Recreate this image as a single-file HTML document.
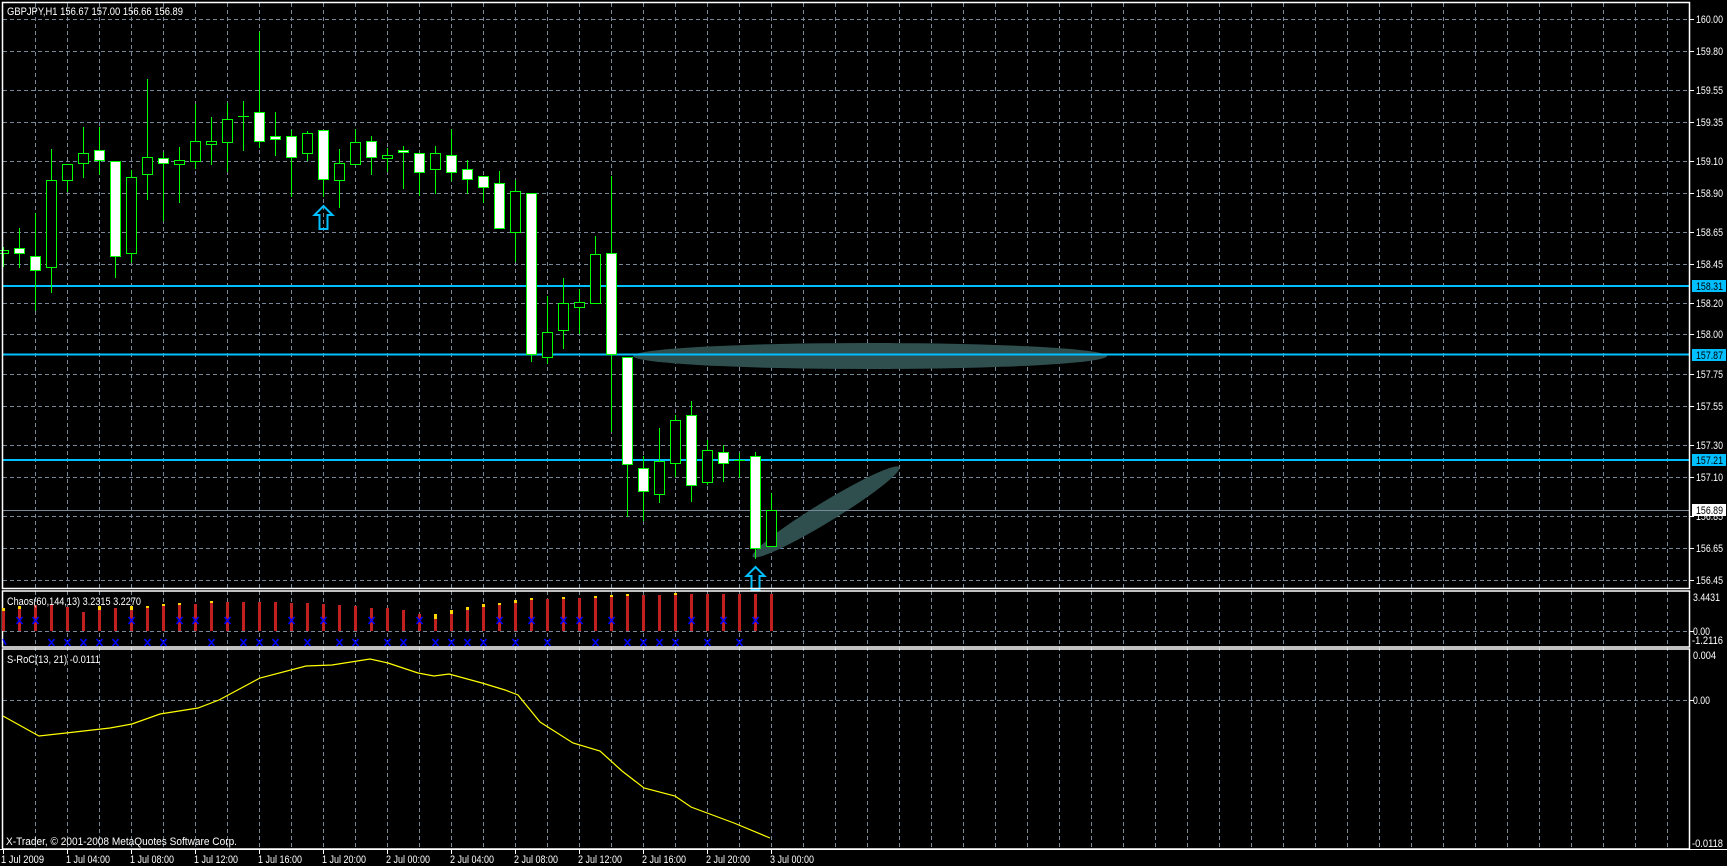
<!DOCTYPE html>
<html><head><meta charset="utf-8"><style>
html,body{margin:0;padding:0;background:#000;overflow:hidden}
svg{display:block}
text{font-family:"Liberation Sans",sans-serif;font-size:11px;fill:#fff}
</style></head><body>
<svg width="1727" height="866" viewBox="0 0 1727 866" xmlns="http://www.w3.org/2000/svg">
<rect width="1727" height="866" fill="#000"/>
<!-- vertical grid -->
<path stroke="#778899" stroke-width="1" stroke-dasharray="4 3" fill="none" d="M35.5 3V849M67.5 3V849M99.5 3V849M131.5 3V849M163.5 3V849M195.5 3V849M227.5 3V849M259.5 3V849M291.5 3V849M323.5 3V849M355.5 3V849M387.5 3V849M419.5 3V849M451.5 3V849M483.5 3V849M515.5 3V849M547.5 3V849M579.5 3V849M611.5 3V849M643.5 3V849M675.5 3V849M707.5 3V849M739.5 3V849M771.5 3V849M803.5 3V849M835.5 3V849M867.5 3V849M899.5 3V849M931.5 3V849M963.5 3V849M995.5 3V849M1027.5 3V849M1059.5 3V849M1091.5 3V849M1123.5 3V849M1155.5 3V849M1187.5 3V849M1219.5 3V849M1251.5 3V849M1283.5 3V849M1315.5 3V849M1347.5 3V849M1379.5 3V849M1411.5 3V849M1443.5 3V849M1475.5 3V849M1507.5 3V849M1539.5 3V849M1571.5 3V849M1603.5 3V849M1635.5 3V849M1667.5 3V849"/>
<!-- horizontal grid -->
<path stroke="#778899" stroke-width="1" stroke-dasharray="4 3" fill="none" d="M3 19.5H1690M3 51.5H1690M3 90.5H1690M3 122.5H1690M3 161.5H1690M3 193.5H1690M3 232.5H1690M3 264.5H1690M3 303.5H1690M3 334.5H1690M3 374.5H1690M3 406.5H1690M3 445.5H1690M3 477.5H1690M3 516.5H1690M3 548.5H1690M3 580.5H1690M3 631.5H1690M3 700.5H1690"/>

<!-- ellipses -->
<ellipse cx="870" cy="356" rx="237" ry="13" fill="#2f4f4f"/>
<ellipse cx="826" cy="512" rx="86" ry="10" fill="#2f4f4f" transform="rotate(-31.4 826 512)"/>

<!-- levels -->
<path stroke="#00bfff" stroke-width="2" d="M3 286H1690M3 354.5H1690M3 460H1690"/>
<path stroke="#778899" stroke-width="1" d="M3 510.5H1690"/>

<!-- wicks -->
<path stroke="#00ff00" stroke-width="1" fill="none" d="M3.5 247V267M19.5 228V268M35.5 213V311M51.5 149V293M67.5 164V192M83.5 127V178M99.5 127V175M115.5 161V278M131.5 170V263M147.5 79V200M163.5 152V221M179.5 147V203M195.5 104V169M211.5 117V165M227.5 103V172M243.5 101V151M259.5 32V148M275.5 112V156M291.5 130V197M307.5 131V161M323.5 130V197M339.5 149V208M355.5 129V164M371.5 136V175M387.5 148V172M403.5 146V189M419.5 153V196M435.5 146V194M451.5 129V181M467.5 160V194M483.5 176V203M499.5 171V228M515.5 180V262M531.5 193V362M547.5 296V364M563.5 278V349M579.5 289V334M595.5 236V303M611.5 176V432M627.5 357V517M643.5 456V521M659.5 428V503M675.5 415V477M691.5 401V502M707.5 440V485M723.5 445V482M739.5 453V478M755.5 452V559M771.5 493V546M238 116.5H249M734 460.5H745"/>
<!-- bodies -->
<g stroke="#00ff00" stroke-width="1">
<rect x="-1.5" y="250.5" width="10" height="3" fill="#000"/>
<rect x="14.5" y="248.5" width="10" height="5" fill="#fff"/>
<rect x="30.5" y="256.5" width="10" height="14" fill="#fff"/>
<rect x="46.5" y="180.5" width="10" height="87" fill="#000"/>
<rect x="62.5" y="164.5" width="10" height="16" fill="#000"/>
<rect x="78.5" y="153.5" width="10" height="10" fill="#000"/>
<rect x="94.5" y="150.5" width="10" height="10" fill="#fff"/>
<rect x="110.5" y="161.5" width="10" height="95" fill="#fff"/>
<rect x="126.5" y="177.5" width="10" height="76" fill="#000"/>
<rect x="142.5" y="157.5" width="10" height="17" fill="#000"/>
<rect x="158.5" y="158.5" width="10" height="5" fill="#fff"/>
<rect x="174.5" y="160.5" width="10" height="4" fill="#000"/>
<rect x="190.5" y="141.5" width="10" height="20" fill="#000"/>
<rect x="206.5" y="141.5" width="10" height="3" fill="#000"/>
<rect x="222.5" y="119.5" width="10" height="23" fill="#000"/>
<rect x="254.5" y="112.5" width="10" height="29" fill="#fff"/>
<rect x="270.5" y="136.5" width="10" height="3" fill="#fff"/>
<rect x="286.5" y="136.5" width="10" height="21" fill="#fff"/>
<rect x="302.5" y="133.5" width="10" height="20" fill="#000"/>
<rect x="318.5" y="130.5" width="10" height="49" fill="#fff"/>
<rect x="334.5" y="163.5" width="10" height="17" fill="#000"/>
<rect x="350.5" y="142.5" width="10" height="22" fill="#000"/>
<rect x="366.5" y="141.5" width="10" height="16" fill="#fff"/>
<rect x="382.5" y="155.5" width="10" height="3" fill="#000"/>
<rect x="398.5" y="150.5" width="10" height="2" fill="#fff"/>
<rect x="414.5" y="153.5" width="10" height="19" fill="#fff"/>
<rect x="430.5" y="153.5" width="10" height="16" fill="#000"/>
<rect x="446.5" y="155.5" width="10" height="17" fill="#fff"/>
<rect x="462.5" y="169.5" width="10" height="10" fill="#fff"/>
<rect x="478.5" y="176.5" width="10" height="11" fill="#fff"/>
<rect x="494.5" y="183.5" width="10" height="45" fill="#fff"/>
<rect x="510.5" y="191.5" width="10" height="41" fill="#000"/>
<rect x="526.5" y="193.5" width="10" height="161" fill="#fff"/>
<rect x="542.5" y="332.5" width="10" height="25" fill="#000"/>
<rect x="558.5" y="303.5" width="10" height="27" fill="#000"/>
<rect x="574.5" y="302.5" width="10" height="5" fill="#000"/>
<rect x="590.5" y="254.5" width="10" height="49" fill="#000"/>
<rect x="606.5" y="253.5" width="10" height="101" fill="#fff"/>
<rect x="622.5" y="357.5" width="10" height="107" fill="#fff"/>
<rect x="638.5" y="468.5" width="10" height="23" fill="#fff"/>
<rect x="654.5" y="461.5" width="10" height="33" fill="#000"/>
<rect x="670.5" y="420.5" width="10" height="43" fill="#000"/>
<rect x="686.5" y="415.5" width="10" height="70" fill="#fff"/>
<rect x="702.5" y="450.5" width="10" height="32" fill="#000"/>
<rect x="718.5" y="452.5" width="10" height="11" fill="#fff"/>
<rect x="750.5" y="456.5" width="10" height="92" fill="#fff"/>
<rect x="766.5" y="510.5" width="10" height="36" fill="#000"/>
</g>

<!-- arrows -->
<path fill="none" stroke="#00bfff" stroke-width="2" d="M323.5 206L332.5 215H327.5V229H319.5V215H314.5Z"/>
<path fill="none" stroke="#00bfff" stroke-width="2" d="M755.5 567L764.5 576H759.5V590H751.5V576H746.5Z"/>

<!-- panels frames -->
<g fill="none" stroke="#fff" stroke-width="1.5">
<rect x="2.5" y="2.5" width="1687" height="586"/>
<rect x="2.5" y="591" width="1687" height="56"/>
<rect x="2.5" y="649" width="1687" height="200"/>
</g>
<path stroke="#fff" d="M0 849.5H1727"/>

<!-- chaos bars -->
<g fill="#c02020">
<rect x="2" y="609" width="3" height="22"/><rect x="18" y="607" width="3" height="24"/><rect x="34" y="605" width="3" height="26"/><rect x="50" y="605" width="3" height="26"/><rect x="66" y="607" width="3" height="24"/><rect x="82" y="612" width="3" height="19"/><rect x="98" y="608" width="3" height="23"/><rect x="114" y="608" width="3" height="23"/><rect x="130" y="608" width="3" height="23"/><rect x="146" y="607" width="3" height="24"/><rect x="162" y="605" width="3" height="26"/><rect x="178" y="604" width="3" height="27"/><rect x="194" y="604" width="3" height="27"/><rect x="210" y="602" width="3" height="29"/><rect x="226" y="602" width="3" height="29"/><rect x="242" y="602" width="3" height="29"/><rect x="258" y="602" width="3" height="29"/><rect x="274" y="602" width="3" height="29"/><rect x="290" y="603" width="3" height="28"/><rect x="306" y="603" width="3" height="28"/><rect x="322" y="604" width="3" height="27"/><rect x="338" y="605" width="3" height="26"/><rect x="354" y="606" width="3" height="25"/><rect x="370" y="608" width="3" height="23"/><rect x="386" y="608" width="3" height="23"/><rect x="402" y="610" width="3" height="21"/><rect x="418" y="614" width="3" height="17"/><rect x="434" y="615" width="3" height="16"/><rect x="450" y="611" width="3" height="20"/><rect x="466" y="608" width="3" height="23"/><rect x="482" y="605" width="3" height="26"/><rect x="498" y="604" width="3" height="27"/><rect x="514" y="601" width="3" height="30"/><rect x="530" y="599" width="3" height="32"/><rect x="546" y="599" width="3" height="32"/><rect x="562" y="598" width="3" height="33"/><rect x="578" y="598" width="3" height="33"/><rect x="594" y="597" width="3" height="34"/><rect x="610" y="596" width="3" height="35"/><rect x="626" y="595" width="3" height="36"/><rect x="642" y="595" width="3" height="36"/><rect x="658" y="595" width="3" height="36"/><rect x="674" y="594" width="3" height="37"/><rect x="690" y="594" width="3" height="37"/><rect x="706" y="594" width="3" height="37"/><rect x="722" y="594" width="3" height="37"/><rect x="738" y="594" width="3" height="37"/><rect x="754" y="594" width="3" height="37"/><rect x="770" y="594" width="3" height="37"/>
</g>
<g fill="#ffd700">
<rect x="2" y="608" width="3" height="3"/><rect x="18" y="606" width="3" height="3"/><rect x="98" y="606" width="3" height="4"/><rect x="130" y="606" width="3" height="4"/><rect x="146" y="606" width="3" height="2"/><rect x="162" y="604" width="3" height="2"/><rect x="178" y="603" width="3" height="2"/><rect x="210" y="601" width="3" height="2"/><rect x="434" y="614" width="3" height="5"/><rect x="450" y="610" width="3" height="4"/><rect x="466" y="607" width="3" height="3"/><rect x="482" y="604" width="3" height="3"/><rect x="498" y="603" width="3" height="2"/><rect x="514" y="600" width="3" height="3"/><rect x="530" y="598" width="3" height="2"/><rect x="562" y="597" width="3" height="2"/><rect x="594" y="596" width="3" height="2"/><rect x="610" y="595" width="3" height="2"/><rect x="626" y="594" width="3" height="2"/><rect x="674" y="593" width="3" height="2"/>
</g>
<!-- blue markers -->
<path stroke="#0000ff" stroke-width="1.6" fill="none" d="M16.5 617l6 7M22.5 617l-6 7M32.5 617l6 7M38.5 617l-6 7M128.5 617l6 7M134.5 617l-6 7M176.5 617l6 7M182.5 617l-6 7M192.5 617l6 7M198.5 617l-6 7M224.5 617l6 7M230.5 617l-6 7M288.5 617l6 7M294.5 617l-6 7M320.5 617l6 7M326.5 617l-6 7M368.5 617l6 7M374.5 617l-6 7M416.5 617l6 7M422.5 617l-6 7M496.5 617l6 7M502.5 617l-6 7M528.5 617l6 7M534.5 617l-6 7M560.5 617l6 7M566.5 617l-6 7M576.5 617l6 7M582.5 617l-6 7M608.5 617l6 7M614.5 617l-6 7M688.5 617l6 7M694.5 617l-6 7M720.5 617l6 7M726.5 617l-6 7M752.5 617l6 7M758.5 617l-6 7
M3 639l3 6M48.5 639l6 7M54.5 639l-6 7M64.5 639l6 7M70.5 639l-6 7M80.5 639l6 7M86.5 639l-6 7M96.5 639l6 7M102.5 639l-6 7M112.5 639l6 7M118.5 639l-6 7M144.5 639l6 7M150.5 639l-6 7M160.5 639l6 7M166.5 639l-6 7M208.5 639l6 7M214.5 639l-6 7M240.5 639l6 7M246.5 639l-6 7M256.5 639l6 7M262.5 639l-6 7M272.5 639l6 7M278.5 639l-6 7M304.5 639l6 7M310.5 639l-6 7M336.5 639l6 7M342.5 639l-6 7M352.5 639l6 7M358.5 639l-6 7M384.5 639l6 7M390.5 639l-6 7M400.5 639l6 7M406.5 639l-6 7M432.5 639l6 7M438.5 639l-6 7M448.5 639l6 7M454.5 639l-6 7M464.5 639l6 7M470.5 639l-6 7M480.5 639l6 7M486.5 639l-6 7M512.5 639l6 7M518.5 639l-6 7M544.5 639l6 7M550.5 639l-6 7M592.5 639l6 7M598.5 639l-6 7M624.5 639l6 7M630.5 639l-6 7M640.5 639l6 7M646.5 639l-6 7M656.5 639l6 7M662.5 639l-6 7M672.5 639l6 7M678.5 639l-6 7M704.5 639l6 7M710.5 639l-6 7M736.5 639l6 7M742.5 639l-6 7"/>

<!-- S-RoC line -->
<polyline fill="none" stroke="#ffff00" stroke-width="1.2" points="3,716 39,736 66,733 110,728 132,724 160,714 198,708 219,700 260,678 306,666 332,665 370,659 388,663 418,673 434,676 449,674 482,683 505,690 518,695 540,722 573,743 600,751 622,771 644,788 675,796 691,807 734,823 770,838"/>

<!-- right axis ticks -->
<path stroke="#fff" d="M1690 19.5h4M1690 51.5h4M1690 90.5h4M1690 122.5h4M1690 161.5h4M1690 193.5h4M1690 232.5h4M1690 264.5h4M1690 303.5h4M1690 334.5h4M1690 374.5h4M1690 406.5h4M1690 445.5h4M1690 477.5h4M1690 516.5h4M1690 548.5h4M1690 580.5h4M1690 631.5h4M1690 700.5h4"/>
<!-- price labels -->
<g>
<text x="1696" y="23" textLength="27" lengthAdjust="spacingAndGlyphs">160.00</text>
<text x="1696" y="55" textLength="27" lengthAdjust="spacingAndGlyphs">159.80</text>
<text x="1696" y="94" textLength="27" lengthAdjust="spacingAndGlyphs">159.55</text>
<text x="1696" y="126" textLength="27" lengthAdjust="spacingAndGlyphs">159.35</text>
<text x="1696" y="165" textLength="27" lengthAdjust="spacingAndGlyphs">159.10</text>
<text x="1696" y="197" textLength="27" lengthAdjust="spacingAndGlyphs">158.90</text>
<text x="1696" y="236" textLength="27" lengthAdjust="spacingAndGlyphs">158.65</text>
<text x="1696" y="268" textLength="27" lengthAdjust="spacingAndGlyphs">158.45</text>
<text x="1696" y="307" textLength="27" lengthAdjust="spacingAndGlyphs">158.20</text>
<text x="1696" y="338" textLength="27" lengthAdjust="spacingAndGlyphs">158.00</text>
<text x="1696" y="378" textLength="27" lengthAdjust="spacingAndGlyphs">157.75</text>
<text x="1696" y="410" textLength="27" lengthAdjust="spacingAndGlyphs">157.55</text>
<text x="1696" y="449" textLength="27" lengthAdjust="spacingAndGlyphs">157.30</text>
<text x="1696" y="481" textLength="27" lengthAdjust="spacingAndGlyphs">157.10</text>
<text x="1696" y="520" textLength="27" lengthAdjust="spacingAndGlyphs">156.85</text>
<text x="1696" y="552" textLength="27" lengthAdjust="spacingAndGlyphs">156.65</text>
<text x="1696" y="584" textLength="27" lengthAdjust="spacingAndGlyphs">156.45</text>
</g>
<rect x="1692" y="280" width="34" height="12" fill="#00bfff"/>
<text x="1696" y="290" textLength="27" lengthAdjust="spacingAndGlyphs" style="fill:#000">158.31</text>
<rect x="1692" y="349" width="34" height="12" fill="#00bfff"/>
<text x="1696" y="359" textLength="27" lengthAdjust="spacingAndGlyphs" style="fill:#000">157.87</text>
<rect x="1692" y="454" width="34" height="12" fill="#00bfff"/>
<text x="1696" y="464" textLength="27" lengthAdjust="spacingAndGlyphs" style="fill:#000">157.21</text>
<rect x="1692" y="504" width="34" height="12" fill="#fff"/>
<text x="1696" y="514" textLength="27" lengthAdjust="spacingAndGlyphs" style="fill:#000">156.89</text>

<text x="1693" y="601" textLength="27" lengthAdjust="spacingAndGlyphs">3.4431</text>
<text x="1693" y="635" textLength="17" lengthAdjust="spacingAndGlyphs">0.00</text>
<text x="1692" y="644" textLength="31" lengthAdjust="spacingAndGlyphs">-1.2116</text>
<text x="1693" y="659" textLength="23" lengthAdjust="spacingAndGlyphs">0.004</text>
<text x="1693" y="704" textLength="17" lengthAdjust="spacingAndGlyphs">0.00</text>
<text x="1692" y="847" textLength="31" lengthAdjust="spacingAndGlyphs">-0.0118</text>

<!-- panel labels -->
<text x="7" y="15" textLength="176" lengthAdjust="spacingAndGlyphs">GBPJPY,H1  156.67 157.00 156.66 156.89</text>
<text x="7" y="605" textLength="134" lengthAdjust="spacingAndGlyphs">Chaos(60,144,13) 3.2315 3.2270</text>
<text x="7" y="663" textLength="93" lengthAdjust="spacingAndGlyphs">S-RoC(13, 21) -0.0111</text>
<text x="6" y="845" textLength="231" lengthAdjust="spacingAndGlyphs">X-Trader, © 2001-2008 MetaQuotes Software Corp.</text>

<!-- time axis -->
<path stroke="#fff" d="M3.5 850v4M67.5 850v4M131.5 850v4M195.5 850v4M259.5 850v4M323.5 850v4M387.5 850v4M451.5 850v4M515.5 850v4M579.5 850v4M643.5 850v4M707.5 850v4M771.5 850v4"/>
<g>
<text x="1" y="863" textLength="43" lengthAdjust="spacingAndGlyphs">1 Jul 2009</text>
<text x="66" y="863" textLength="44" lengthAdjust="spacingAndGlyphs">1 Jul 04:00</text>
<text x="130" y="863" textLength="44" lengthAdjust="spacingAndGlyphs">1 Jul 08:00</text>
<text x="194" y="863" textLength="44" lengthAdjust="spacingAndGlyphs">1 Jul 12:00</text>
<text x="258" y="863" textLength="44" lengthAdjust="spacingAndGlyphs">1 Jul 16:00</text>
<text x="322" y="863" textLength="44" lengthAdjust="spacingAndGlyphs">1 Jul 20:00</text>
<text x="386" y="863" textLength="44" lengthAdjust="spacingAndGlyphs">2 Jul 00:00</text>
<text x="450" y="863" textLength="44" lengthAdjust="spacingAndGlyphs">2 Jul 04:00</text>
<text x="514" y="863" textLength="44" lengthAdjust="spacingAndGlyphs">2 Jul 08:00</text>
<text x="578" y="863" textLength="44" lengthAdjust="spacingAndGlyphs">2 Jul 12:00</text>
<text x="642" y="863" textLength="44" lengthAdjust="spacingAndGlyphs">2 Jul 16:00</text>
<text x="706" y="863" textLength="44" lengthAdjust="spacingAndGlyphs">2 Jul 20:00</text>
<text x="770" y="863" textLength="44" lengthAdjust="spacingAndGlyphs">3 Jul 00:00</text>
</g>
</svg>
</body></html>
